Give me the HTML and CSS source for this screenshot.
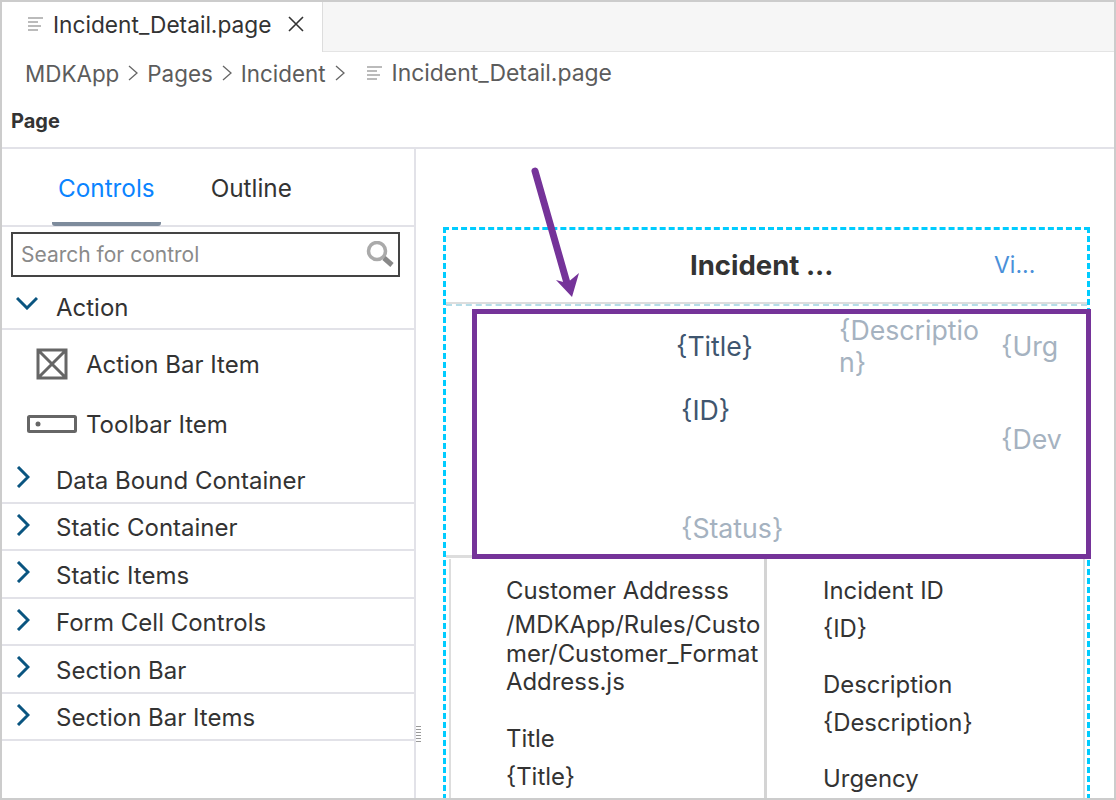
FILE: index.html
```html
<!DOCTYPE html>
<html lang="en">
<head>
  <meta charset="UTF-8" />
  <title>Incident_Detail.page</title>
  <link rel="stylesheet" href="styles.css">
</head>
<body>
<div class="window">
  <div class="tabbar">
    <div class="file-tab">
      <svg class="file-icon" width="16" height="16" viewBox="0 0 16 16"><path d="M1 2h15M1 6h10M1 10h13M1 14h10" /></svg>
      <span>Incident_Detail.page</span>
      <svg class="close-icon" width="16" height="16" viewBox="0 0 16 16"><path d="M1 1l14 14M15 1L1 15" /></svg>
    </div>
  </div>

  <div class="crumbs">
    <span>MDKApp</span>
    <svg class="crumb-sep" width="10" height="16" viewBox="0 0 10 16"><path d="M1 1l8 7-8 7" /></svg>
    <span>Pages</span>
    <svg class="crumb-sep" width="10" height="16" viewBox="0 0 10 16"><path d="M1 1l8 7-8 7" /></svg>
    <span>Incident</span>
    <svg class="crumb-sep" width="10" height="16" viewBox="0 0 10 16"><path d="M1 1l8 7-8 7" /></svg>
    <svg class="file-icon crumb-file" width="16" height="16" viewBox="0 0 16 16"><path d="M1 2h15M1 6h10M1 10h13M1 14h10" /></svg>
    <span class="crumb-last">Incident_Detail.page</span>
  </div>

  <div class="page-title">Page</div>

  <div class="main">
    <div class="sidebar">
      <div class="side-tabs">
        <span class="side-tab active">Controls</span>
        <span class="side-tab">Outline</span>
      </div>
      <div class="search">
        <span>Search for control</span>
        <svg width="30" height="28" viewBox="0 0 30 28"><circle cx="11" cy="10" r="8.5" class="lens" /><path d="M18 17l8 7" class="handle" /></svg>
      </div>
      <div class="group open">
        <svg class="chev" width="22" height="14" viewBox="0 0 22 14"><path d="M1 2l10 10L21 2" /></svg>
        <span>Action</span>
      </div>
      <div class="item first">
        <span class="item-icon">
          <svg width="32" height="32" viewBox="0 0 32 32"><path d="M2 2h28v28H2zM2 2l28 28M30 2L2 30" /></svg>
        </span>
        <span>Action Bar Item</span>
      </div>
      <div class="item last">
        <span class="item-icon">
          <svg width="50" height="18" viewBox="0 0 50 18"><rect x="1.5" y="1.5" width="47" height="15" rx="1" /><circle cx="11" cy="9" r="2.5" class="dot" /></svg>
        </span>
        <span>Toolbar Item</span>
      </div>
      <div class="group">
        <svg class="chev" width="14" height="22" viewBox="0 0 14 22"><path d="M2 1l10 10L2 21" /></svg>
        <span>Data Bound Container</span>
      </div>
      <div class="group">
        <svg class="chev" width="14" height="22" viewBox="0 0 14 22"><path d="M2 1l10 10L2 21" /></svg>
        <span>Static Container</span>
      </div>
      <div class="group">
        <svg class="chev" width="14" height="22" viewBox="0 0 14 22"><path d="M2 1l10 10L2 21" /></svg>
        <span>Static Items</span>
      </div>
      <div class="group">
        <svg class="chev" width="14" height="22" viewBox="0 0 14 22"><path d="M2 1l10 10L2 21" /></svg>
        <span>Form Cell Controls</span>
      </div>
      <div class="group">
        <svg class="chev" width="14" height="22" viewBox="0 0 14 22"><path d="M2 1l10 10L2 21" /></svg>
        <span>Section Bar</span>
      </div>
      <div class="group">
        <svg class="chev" width="14" height="22" viewBox="0 0 14 22"><path d="M2 1l10 10L2 21" /></svg>
        <span>Section Bar Items</span>
      </div>
    </div>

    <div class="canvas">
      <div class="grip"></div>
      <div class="phone">
        <div class="action-bar">
          <span class="bar-title">Incident ...</span>
          <span class="bar-link">Vi...</span>
        </div>
        <div class="section-wrap">
          <div class="object-header">
            <span class="oh-title">{Title}</span>
            <span class="oh-desc">{Description}</span>
            <span class="oh-urg">{Urg</span>
            <span class="oh-id">{ID}</span>
            <span class="oh-dev">{Dev</span>
            <span class="oh-status">{Status}</span>
          </div>
          <div class="key-values">
            <div class="kv-col left">
              <div class="kv">
                <div class="kv-key">Customer Addresss</div>
                <div class="kv-val multi">/MDKApp/Rules/Custo<br>mer/Customer_Format<br>Address.js</div>
              </div>
              <div class="kv">
                <div class="kv-key">Title</div>
                <div class="kv-val">{Title}</div>
              </div>
            </div>
            <div class="kv-col right">
              <div class="kv">
                <div class="kv-key">Incident ID</div>
                <div class="kv-val">{ID}</div>
              </div>
              <div class="kv">
                <div class="kv-key">Description</div>
                <div class="kv-val">{Description}</div>
              </div>
              <div class="kv">
                <div class="kv-key">Urgency</div>
              </div>
            </div>
          </div>
        </div>
      </div>
      <svg class="arrow" width="70" height="140" viewBox="0 0 70 140">
        <path class="arrow-line" d="M12 6L44 118" />
        <path class="arrow-head" d="M49 132L33 115 44 118 56 108z" />
      </svg>
    </div>
  </div>
</div>
</body>
</html>
```

FILE: styles.css
```css
* {
  box-sizing: border-box;
}
body {
  margin: 0;
  font-family: Inter, "Liberation Sans", sans-serif;
  color: #333;
  background-color: white;
}
.window {
  width: 1116px;
  height: 800px;
  border: 2px solid #ccc;
  overflow: hidden;
}

.tabbar {
  height: 50px;
  background-color: #f6f6f6;
  border-bottom: 1px solid #e4e4e4;
}
.file-tab {
  width: 321px;
  height: 50px;
  background-color: white;
  border-right: 1px solid #ddd;
  display: flex;
  align-items: center;
  padding: 0 0 6px 25px;
  font-size: 22.7px;
}
.file-tab span {
  margin-left: 10px;
}
.file-icon path {
  stroke: #bbb;
  stroke-width: 2;
  fill: none;
}
.close-icon {
  margin-left: 17px;
}
.close-icon path {
  stroke: #333;
  stroke-width: 1.6;
  fill: none;
}

.crumbs {
  height: 44px;
  display: flex;
  align-items: center;
  padding: 0 0 2px 23px;
  font-size: 22.4px;
  color: #5c5c5c;
}
.crumb-sep {
  margin: 0 9px;
}
.crumb-sep path {
  stroke: #666;
  stroke-width: 1.3;
  fill: none;
}
.crumb-file {
  margin: 0 10px 0 12px;
}
.crumb-last {
  font-size: 22.9px;
}

.page-title {
  height: 53px;
  padding: 13px 0 0 9px;
  font-size: 20px;
  font-weight: bold;
  border-bottom: 2px solid #e2e2e8;
}

.main {
  display: flex;
  height: 650px;
}
.sidebar {
  width: 414px;
  border-right: 2px solid #e2e2e8;
  flex-shrink: 0;
  font-size: 24px;
}
.side-tabs {
  height: 78px;
  padding-left: 50px;
  display: flex;
  border-bottom: 2px solid #e2e2e8;
}
.side-tab {
  padding: 24px 6px 0;
  margin-right: 44px;
  font-size: 24.3px;
}
.side-tab.active {
  color: #0a84ff;
  border-bottom: 4px solid #7d8b9c;
  border-radius: 3px;
  height: 77px;
}
.search {
  margin: 5px 14px 0 9px;
  height: 45px;
  border: 2px solid #444;
  display: flex;
  align-items: center;
  justify-content: space-between;
  padding: 0 2px 0 8px;
  font-size: 21px;
  color: #8a8a8a;
}
.search .lens {
  fill: none;
  stroke: #aaa;
  stroke-width: 3.5;
}
.search .handle {
  stroke: #888;
  stroke-width: 5;
}
.group {
  height: 47.5px;
  display: flex;
  align-items: center;
  padding: 3px 0 0 14px;
  border-bottom: 2px solid #e2e2e8;
}
.group span {
  margin-left: 26px;
}
.group.open {
  height: 53px;
  padding-top: 9px;
}
.group.open .chev {
  margin-top: -8px;
}
.group.open span {
  margin-left: 18px;
}
.chev {
  flex-shrink: 0;
  margin-top: -6px;
}
.chev path {
  stroke: #0a5580;
  stroke-width: 3;
  fill: none;
}
.item {
  height: 60px;
  display: flex;
  align-items: center;
}
.item.first {
  margin-top: 4px;
}
.item.last {
  margin-bottom: 2px;
}
.item-icon {
  width: 84px;
  display: flex;
  justify-content: center;
  padding-left: 16px;
}
.item-icon path,
.item-icon rect {
  stroke: #666;
  stroke-width: 3;
  fill: none;
}
.item-icon .dot {
  fill: #666;
}

.canvas {
  flex: 1;
  position: relative;
  padding: 78px 0 0 27px;
}
.grip {
  position: absolute;
  left: 0;
  top: 577px;
  width: 5px;
  height: 16px;
  background: repeating-linear-gradient(#999 0 1px, white 1px 3px);
}
.phone {
  width: 647px;
  height: 600px;
  border: 3px dashed #00ccff;
  border-bottom: none;
}
.action-bar {
  height: 74px;
  display: flex;
  align-items: center;
  padding: 0 0 2px 244px;
  border-bottom: 2px solid #ddd;
}
.bar-title {
  font-size: 27.5px;
  font-weight: bold;
  width: 304px;
}
.bar-link {
  font-size: 23px;
  color: #4a90d9;
}
.section-wrap {
  border-top: 2px dashed #b5dde8;
  padding-top: 3px;
}
.object-header {
  margin-left: 26px;
  margin-right: -4px;
  height: 250px;
  border: 5px solid #753399;
  display: grid;
  grid-template-columns: 199px 163px 162px 64px;
  grid-template-rows: 64px 63px 1fr;
  font-size: 26.7px;
  line-height: 30px;
  position: relative;
  z-index: 1;
  background-color: white;
}
.object-header::before {
  content: "";
  position: absolute;
  left: -31px;
  bottom: -4px;
  width: 26px;
  height: 3px;
  background-color: #ddd;
}
.oh-title {
  grid-column: 2;
  grid-row: 1;
  align-self: center;
  color: #3f566f;
}
.oh-desc {
  grid-column: 3;
  grid-row: 1;
  width: 145px;
  line-height: 32px;
  color: #a5b2c0;
  word-break: break-all;
}
.oh-urg {
  grid-column: 4;
  grid-row: 1;
  align-self: center;
  color: #a5b2c0;
  white-space: nowrap;
}
.oh-id {
  grid-column: 2;
  grid-row: 2;
  align-self: center;
  margin-left: 5px;
  white-space: nowrap;
  color: #3f566f;
}
.oh-dev {
  grid-column: 4;
  grid-row: 2 / 4;
  align-self: start;
  margin-top: 46px;
  color: #a5b2c0;
  white-space: nowrap;
}
.oh-status {
  grid-column: 2;
  grid-row: 3;
  align-self: end;
  margin-left: 5px;
  padding-bottom: 11px;
  color: #a5b2c0;
}
.key-values {
  margin-left: 3px;
  margin-right: 2px;
  display: flex;
  border: 2px solid #ddd;
  border-top: none;
  height: 300px;
  font-size: 23.9px;
}
.kv-col {
  width: 317px;
  padding: 17px 0 0 55px;
}
.kv-col.left {
  border-right: 3px solid #d4d4d4;
}
.kv-col.right {
  padding-left: 56px;
}
.kv {
  margin-bottom: 27px;
}
.kv-col.right .kv {
  margin-bottom: 26px;
}
.kv-key {
  line-height: 30px;
}
.kv-val {
  margin-top: 8px;
  line-height: 30px;
  white-space: nowrap;
}
.kv-val.multi {
  margin-top: 5px;
  line-height: 28.5px;
}
.arrow {
  position: absolute;
  left: 107px;
  top: 16px;
  z-index: 2;
}
.arrow-line {
  stroke: #753399;
  stroke-width: 7;
  stroke-linecap: round;
  fill: none;
}
.arrow-head {
  fill: #753399;
}
```
